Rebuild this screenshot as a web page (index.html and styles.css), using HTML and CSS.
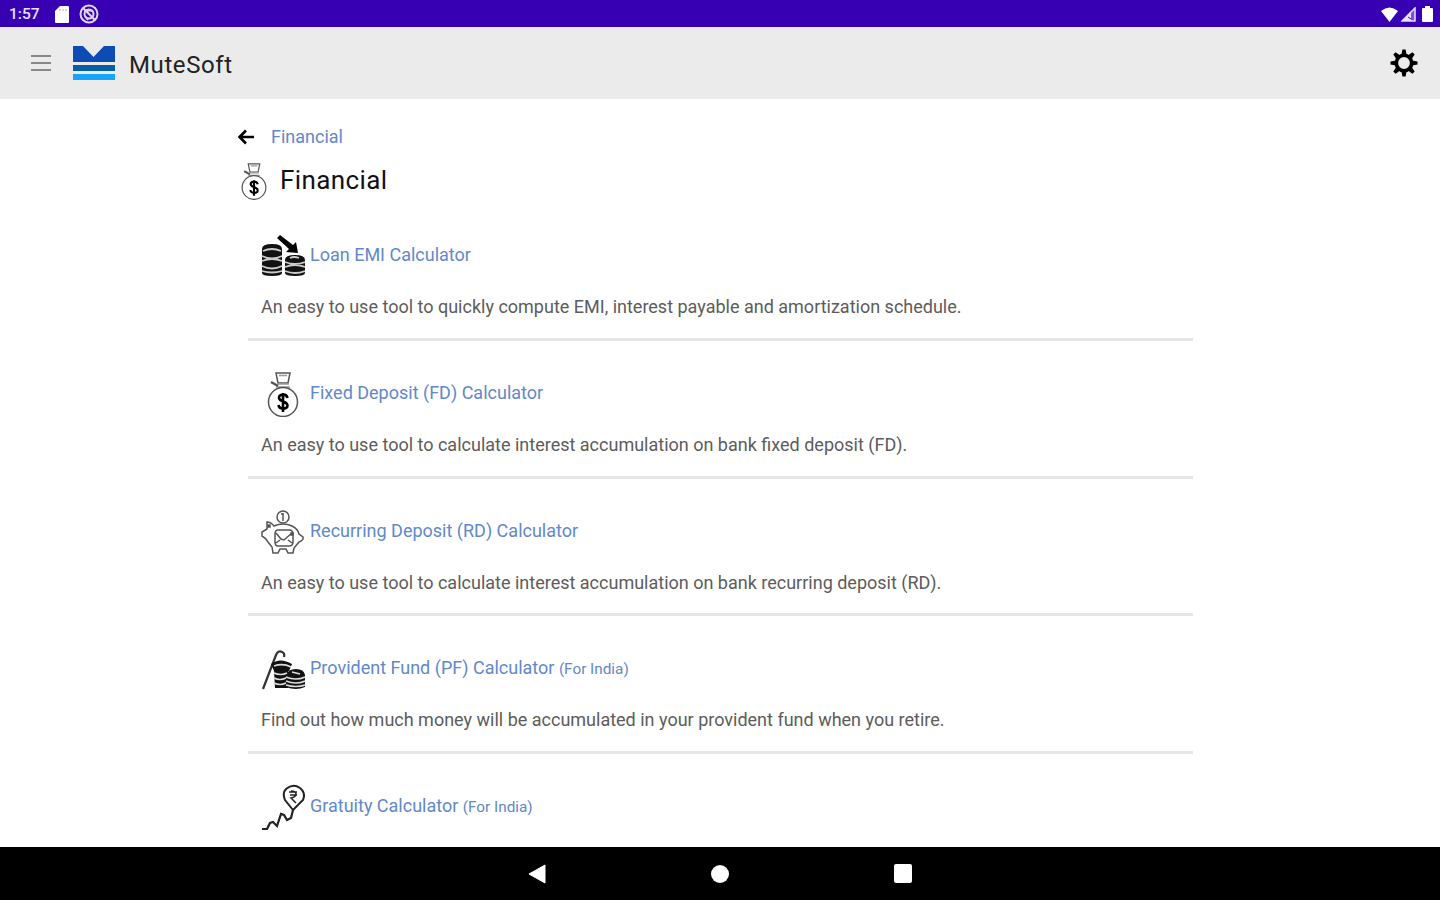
FILE: index.html
```
<!DOCTYPE html>
<html lang="en">
<head>
    <meta charset="UTF-8">
    <meta name="viewport" content="width=device-width, initial-scale=1.0">
    <title>MuteSoft - Financial</title>
    <link rel="stylesheet" href="styles.css">
</head>
<body>
    <!-- shared icons -->
    <svg class="sprite" aria-hidden="true">
        <symbol id="money-bag" viewBox="0 0 44 46">
            <g fill="none" stroke="#555" stroke-width="1.5">
                <path d="M15 2h14l-2 10H17z"/>
                <path d="M18 4.500h8M16 13h12M15 16h14" stroke="#999"/>
                <path d="M17 15l-7-4" stroke-width="2.500"/>
                <circle cx="22" cy="31" r="14.500"/>
            </g>
            <path d="M26.500 27c-1-5-9-4-8.500 0 .5 4 8.500 3 8.500 7.500s-8.500 4-9-.5M22 22v19" fill="none" stroke="#000" stroke-width="2.600"/>
        </symbol>
    </svg>

    <div class="status-bar">
        <span class="time">1:57</span>
        <svg class="sd" width="14" height="17" viewBox="0 0 14 17"><path d="M5 0h8q1 0 1 1v15q0 1-1 1H1q-1 0-1-1V5z" fill="#fff"/><path d="M5 3v2M8 3v2M11 3v2" stroke="#bba6ea"/></svg>
        <svg class="dnd" width="20" height="20" viewBox="0 0 20 20" fill="none" stroke="#e0d6f8"><circle cx="10" cy="10" r="8.500" stroke-width="2"/><circle cx="10" cy="10" r="4.500" stroke-width="2"/><path d="M4 4l12 12M7 6l7 1M6 12l3 4" stroke-width="2"/></svg>
        <div class="signals">
            <svg width="17" height="15" viewBox="0 0 17 15"><path d="M0 4q8.500-7 17 0L8.500 15z" fill="#fff"/></svg>
            <svg width="15" height="15" viewBox="0 0 15 15"><path d="M14 1v13H1z" fill="#7952d0" stroke="#e8e0fa" stroke-width="1.500"/><path d="M10 5v9H1z" fill="#e8e0fa"/><path d="M7 10l3 2" stroke="#3700b3"/></svg>
            <svg width="11" height="16" viewBox="0 0 11 16"><path d="M3 0h5v2h2q1 0 1 1v12q0 1-1 1H1q-1 0-1-1V3q0-1 1-1h2z" fill="#fff"/></svg>
        </div>
    </div>

    <header class="app-bar">
        <button class="menu" aria-label="Menu"><span></span><span></span><span></span></button>
        <svg class="logo" width="42" height="34" viewBox="0 0 42 34">
            <path d="M0 0h10l10.500 11L31 0h11v16H0z" fill="#0d4bb5"/>
            <path d="M0 19h42v6H0z" fill="#075fa8"/>
            <path d="M0 28h42v6H0z" fill="#16a5fa"/>
        </svg>
        <span class="brand">MuteSoft</span>
        <svg class="settings" width="28" height="28" viewBox="-14 -14 28 28">
            <g id="teeth"><path d="M-2.600 -8l1-5.500h3.200l1 5.500zM-2.600 8l1 5.500h3.200l1-5.500zM-8 -2.600l-5.500 1v3.200l5.500 1zM8 -2.600l5.500 1v3.200l-5.500 1z"/></g>
            <use href="#teeth" transform="rotate(45)"/>
            <circle r="7.700" fill="none" stroke="#000" stroke-width="3.600"/>
        </svg>
    </header>

    <main class="content">
        <nav class="breadcrumb">
            <svg width="17" height="16" viewBox="0 0 17 16"><path d="M17 8H2.500M9 1.500L2.500 8 9 14.500" fill="none" stroke="#000" stroke-width="2.600"/></svg>
            <a>Financial</a>
        </nav>
        <h1><svg width="36" height="38"><use href="#money-bag"/></svg><span>Financial</span></h1>

        <ul class="tools">
            <li>
                <div class="tool-title">
                    <svg width="44" height="46" viewBox="0 0 44 46">
                        <path d="M1 16q0-5 10-5t10 5v24q0 3-10 3T1 40zM24 27q0-5 10-5t10 5v13q0 3-10 3t-10-3z" fill="#111"/>
                        <path d="M2 18q9-4 18 0M1 23q10 5 20 0M1 28q10-4 20 0M1 33q10 5 20 0M1 38q10 3 20 0M24 29q10 4 20 0M24 34q10-4 20 0M24 38q10 4 20 0M29 25q4-2 9 0" fill="none" stroke="#ccc" stroke-width="1.800"/>
                        <path d="M16 5l3-3 13 10 3-3 2 11-12-1 3-3z" fill="#000"/>
                    </svg>
                    <a>Loan EMI Calculator</a>
                </div>
                <p>An easy to use tool to quickly compute EMI, interest payable and amortization schedule.</p>
            </li>
            <li>
                <div class="tool-title">
                    <svg width="44" height="46"><use href="#money-bag"/></svg>
                    <a>Fixed Deposit (FD) Calculator</a>
                </div>
                <p>An easy to use tool to calculate interest accumulation on bank fixed deposit (FD).</p>
            </li>
            <li>
                <div class="tool-title">
                    <svg width="44" height="46" viewBox="0 0 44 46" fill="none" stroke="#555" stroke-width="1.500">
                        <circle cx="22" cy="8" r="6"/><path d="M22 4v8M20 5h2"/>
                        <path d="M13 17q9-4 18 0 6 3 7 8l4 3q1 3-4 5l-5 6-1 5h-5l-2-4h-6l-2 4h-5l-1-6-4-5q-2-4-6-6v-4l5-3v-7q4 0 7 4z"/>
                        <path d="M17 21h11q4 0 4 4v8q0 4-4 4H17q-3 0-3-4v-8q0-4 3-4zM15 24l5 6 3 1 8-7M15 34l4-3M31 34l-4-3"/>
                        <path d="M7 16h2v2H7zM30 24h2v2h-2z" fill="#222"/>
                    </svg>
                    <a>Recurring Deposit (RD) Calculator</a>
                </div>
                <p>An easy to use tool to calculate interest accumulation on bank recurring deposit (RD).</p>
            </li>
            <li>
                <div class="tool-title">
                    <svg width="44" height="46" viewBox="0 0 44 46">
                        <path d="M2 43L15 9q2-5 6-3 3 1 2 5" fill="none" stroke="#333" stroke-width="2.200"/>
                        <path d="M10 18q9-7 21 0l-3 7H13zM13 25h14v17H14zM25 29q2-6 10-6t9 6v12q-9 4-19 0z" fill="#111"/>
                        <path d="M13 20q9-3 17 1M13 27q7 3 13 0M13 32q6 3 12 0M13 37q6 3 12 0M25 31q10 4 19 0M25 35q10 4 19 0M25 39q10 3 19 0M31 26l8 2" fill="none" stroke="#ddd" stroke-width="1.700"/>
                    </svg>
                    <a>Provident Fund (PF) Calculator <small>(For India)</small></a>
                </div>
                <p>Find out how much money will be accumulated in your provident fund when you retire.</p>
            </li>
            <li>
                <div class="tool-title">
                    <svg width="44" height="46" viewBox="0 0 44 46" fill="none" stroke="#222" stroke-width="2">
                        <path d="M32 26l-8-10Q21 9 25 5q7-6 14-1 6 5 3 12z"/>
                        <path d="M28 8h8M29 11h7M30 7q5 0 5 3t-5 4l5 5" stroke-width="1.500"/>
                        <path d="M32 26l-2 8-4 2-3-5-3-1-4 12-4-4-3 1-3 6H1" stroke-width="2.200"/>
                    </svg>
                    <a>Gratuity Calculator <small>(For India)</small></a>
                </div>
            </li>
        </ul>
    </main>

    <div class="nav-bar">
        <svg width="18" height="20" viewBox="0 0 18 20"><path d="M17 1v18L1 10z" fill="#fff" stroke="#fff" stroke-linejoin="round"/></svg>
        <span class="home"></span>
        <span class="recent"></span>
    </div>
</body>
</html>
```
FILE: styles.css
```
* {
    box-sizing: border-box;
}
body {
    margin: 0;
    height: 100vh;
    display: flex;
    flex-direction: column;
    overflow: hidden;
    background: #fff;
    font-family: Roboto, "Liberation Sans", sans-serif;
    color: #5c5c5c;
}
svg {
    display: block;
    flex: none;
}
.sprite {
    position: absolute;
    width: 0;
    height: 0;
}
.status-bar {
    flex: none;
    display: flex;
    align-items: center;
    height: 27px;
    padding: 1px 7px 0 9px;
    background: #3700b3;
    color: #e8e0fa;
}
.time {
    width: 46px;
    font-size: 15.5px;
    font-weight: 500;
}
.dnd { margin-left: 10px; }
.signals {
    display: flex;
    align-items: center;
    gap: 3px;
    margin-left: auto;
}
.signals svg:last-child { margin-left: 3px; }
.app-bar {
    flex: none;
    display: flex;
    align-items: center;
    height: 72px;
    padding: 0 22px 0 31px;
    background: #ebebeb;
}
.menu {
    display: flex;
    flex-direction: column;
    gap: 5px;
    width: 20px;
    margin-right: 22px;
    padding: 0;
    border: none;
    background: none;
}
.menu span {
    width: 20px;
    height: 2px;
    background: #888;
}
.brand {
    margin: 4px 0 0 14px;
    font-size: 24px;
    letter-spacing: 0.6px;
    color: #222;
}
.settings { margin-left: auto; }
.content {
    flex: 1;
    min-height: 0;
    width: 945px;
    margin-left: 248px;
    overflow: visible;
}
a {
    color: #6288cb;
    font-size: 18px;
}
.breadcrumb {
    display: flex;
    align-items: center;
    gap: 17px;
    height: 24px;
    margin: 26px 0 0 -11px;
}
.breadcrumb a { margin-top: -2px; }
h1 {
    display: flex;
    align-items: center;
    height: 40px;
    margin: 12px 0 0 -12px;
    font-size: 26px;
    font-weight: 400;
    letter-spacing: 0.4px;
    color: #111;
}
h1 svg { margin-right: 8px; }
h1 span { margin-top: -2px; }
.tools {
    list-style: none;
    margin: 2px 0 0;
    padding: 0;
}
.tools li {
    height: 137.75px;
    padding: 30px 13px 0;
    border-bottom: 3px solid #e6e6e6;
}
.tool-title {
    display: flex;
    align-items: center;
    gap: 5px;
    height: 46px;
}
.tool-title a { margin-top: -3px; }
small { font-size: 15.3px; }
p {
    margin: 16px 0 0;
    font-size: 18px;
    line-height: 24px;
    white-space: nowrap;
}
.nav-bar {
    flex: none;
    display: flex;
    align-items: center;
    justify-content: center;
    gap: 165px;
    height: 53px;
    background: #000;
}
.home {
    width: 18px;
    height: 18px;
    border-radius: 50%;
    background: #fff;
}
.recent {
    width: 18px;
    height: 19px;
    border-radius: 2px;
    background: #fff;
}
```
